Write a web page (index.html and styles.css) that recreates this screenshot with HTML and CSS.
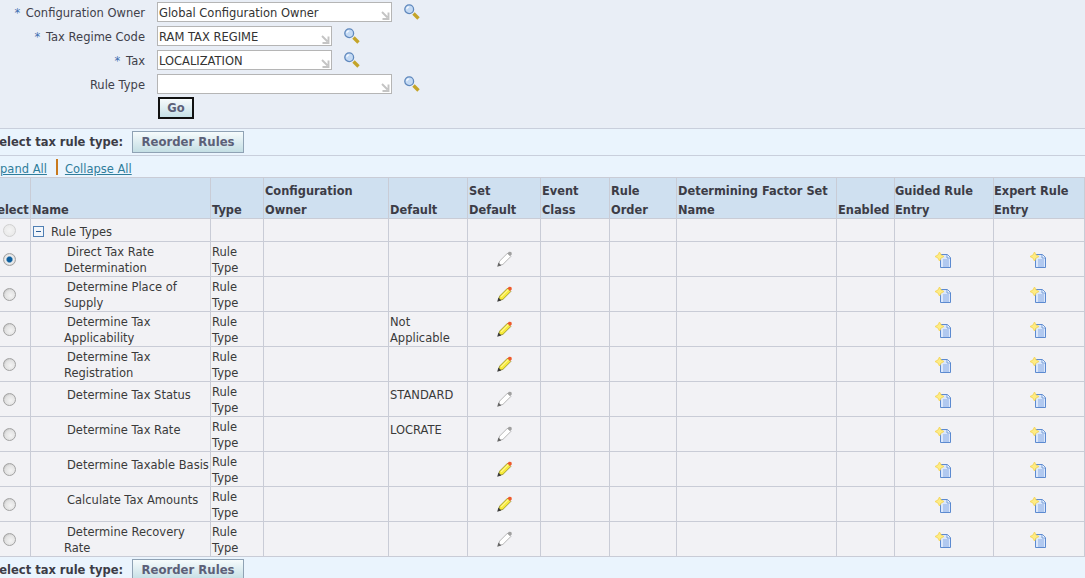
FILE: index.html
```html
<!DOCTYPE html>
<html lang="en">
<head>
<meta charset="utf-8">
<title>Tax Rules</title>
<link rel="stylesheet" href="styles.css">
</head>
<body>
<svg class="defs" width="0" height="0" aria-hidden="true">
  <symbol id="search" viewBox="0 0 16 16">
    <path d="M9.500 9.500l5 5" fill="none" stroke="#c4a429" stroke-width="3.400"/>
    <circle cx="5.200" cy="5.200" r="4.400" fill="#c4daf4" stroke="#5f88bd" stroke-width="1.300"/>
    <path d="M2.800 5.200a2.500 2.500 0 0 1 2.400-2.400" fill="none" stroke="#f4f9ff" stroke-width="1.200"/>
  </symbol>
  <symbol id="corner" viewBox="0 0 9 9">
    <path d="M1 1l5.500 5.500M7.500 1.500v6.500H1.500" fill="none" stroke="#c4c4c4" stroke-width="1.900"/>
  </symbol>
  <symbol id="pencil-on" viewBox="0 0 16 16">
    <path d="M3.600 10.100l7.900-7.900 3.300 3.300-7.900 7.900-4.300 1z" fill="#f6ea3a" stroke="#8f8a24" stroke-width=".8"/>
    <path d="M5.200 10.800l7.400-7.400" stroke="#fff59a" stroke-width="1.100"/>
    <path d="M11.300 2.400l1.700-1.700 2.300.4.600 2.100-1.700 1.800z" fill="#ee5b2c"/>
    <path d="M1.200 15.800l1.200-4.200 3 3z" fill="#3c3c3c"/>
  </symbol>
  <symbol id="pencil-off" viewBox="0 0 16 16">
    <path d="M3.600 10.100l7.900-7.900 3.300 3.300-7.900 7.900-4.300 1z" fill="#fff" stroke="#a5a5a5" stroke-width=".8"/>
    <path d="M11.300 2.400l1.700-1.700 2.300.4.600 2.100-1.700 1.800z" fill="#a0a0a0"/>
    <path d="M1.200 15.800l1.200-4.200 3 3z" fill="#666"/>
  </symbol>
  <symbol id="newdoc" viewBox="0 -1 18 17">
    <path d="M5.500 2.500h7l3 3v10h-10z" fill="#dce8fb" stroke="#5c8ad0" stroke-width="1"/>
    <path d="M12 2.500v3.500h3.500" fill="#f4f8fe" stroke="#5c8ad0" stroke-width=".8"/>
    <path d="M8 8h6M8 10h6M8 12h6M8 14h6" stroke="#86aae4" stroke-width="1"/>
    <path d="M4.500 0l1.500 3 3 1.500-3 1.500-1.500 3-1.500-3-3-1.500 3-1.500z" fill="#fdec84" stroke="#f6d657" stroke-width=".9"/>
  </symbol>
</svg>

<div class="page">
  <section class="search">
    <div class="field">
      <label class="lbl"><span class="req">*</span> Configuration Owner</label>
      <span class="input wide">Global Configuration Owner<svg class="corner"><use href="#corner"/></svg></span>
      <svg class="lens"><use href="#search"/></svg>
    </div>
    <div class="field">
      <label class="lbl"><span class="req">*</span> Tax Regime Code</label>
      <span class="input">RAM TAX REGIME<svg class="corner"><use href="#corner"/></svg></span>
      <svg class="lens"><use href="#search"/></svg>
    </div>
    <div class="field">
      <label class="lbl"><span class="req">*</span> Tax</label>
      <span class="input">LOCALIZATION<svg class="corner"><use href="#corner"/></svg></span>
      <svg class="lens"><use href="#search"/></svg>
    </div>
    <div class="field">
      <label class="lbl">Rule Type</label>
      <span class="input wide"><svg class="corner"><use href="#corner"/></svg></span>
      <svg class="lens"><use href="#search"/></svg>
    </div>
    <div class="go-row"><button class="go" type="button">Go</button></div>
  </section>

  <div class="actions">
    <strong class="prompt">Select tax rule type:</strong>
    <button class="btn" type="button">Reorder Rules</button>
  </div>

  <div class="links">
    <a href="#">Expand All</a><span class="sep"></span><a href="#">Collapse All</a>
  </div>

  <table class="grid">
    <colgroup>
      <col class="c1"><col class="c2"><col class="c3"><col class="c4"><col class="c5"><col class="c6">
      <col class="c7"><col class="c8"><col class="c9"><col class="c10"><col class="c11"><col class="c12">
    </colgroup>
    <thead>
      <tr>
        <th class="sel"><span class="hd">Select</span></th>
        <th><span class="hd">Name</span></th>
        <th><span class="hd">Type</span></th>
        <th><span class="hd">Configuration Owner</span></th>
        <th><span class="hd">Default</span></th>
        <th><span class="hd">Set Default</span></th>
        <th><span class="hd">Event Class</span></th>
        <th><span class="hd">Rule Order</span></th>
        <th><span class="hd">Determining Factor Set Name</span></th>
        <th><span class="hd">Enabled</span></th>
        <th class="tight"><span class="hd">Guided Rule Entry</span></th>
        <th class="tight"><span class="hd">Expert Rule Entry</span></th>
      </tr>
    </thead>
    <tbody>
      <tr class="root">
        <td class="mid pick"><span class="radio off"></span></td>
        <td class="tree"><span class="minus"></span>Rule Types</td>
        <td></td><td></td><td></td><td></td><td></td><td></td><td></td><td></td><td></td><td></td>
      </tr>
      <tr>
        <td class="mid pick"><span class="radio on"></span></td>
        <td class="name">Direct Tax Rate Determination</td><td>Rule Type</td><td></td><td></td>
        <td class="mid"><svg class="pen"><use href="#pencil-off"/></svg></td>
        <td></td><td></td><td></td><td></td>
        <td class="mid"><svg class="doc"><use href="#newdoc"/></svg></td><td class="mid"><svg class="doc"><use href="#newdoc"/></svg></td>
      </tr>
      <tr>
        <td class="mid pick"><span class="radio"></span></td>
        <td class="name">Determine Place of Supply</td><td>Rule Type</td><td></td><td></td>
        <td class="mid"><svg class="pen"><use href="#pencil-on"/></svg></td>
        <td></td><td></td><td></td><td></td>
        <td class="mid"><svg class="doc"><use href="#newdoc"/></svg></td><td class="mid"><svg class="doc"><use href="#newdoc"/></svg></td>
      </tr>
      <tr>
        <td class="mid pick"><span class="radio"></span></td>
        <td class="name">Determine Tax Applicability</td><td>Rule Type</td><td></td><td>Not Applicable</td>
        <td class="mid"><svg class="pen"><use href="#pencil-on"/></svg></td>
        <td></td><td></td><td></td><td></td>
        <td class="mid"><svg class="doc"><use href="#newdoc"/></svg></td><td class="mid"><svg class="doc"><use href="#newdoc"/></svg></td>
      </tr>
      <tr>
        <td class="mid pick"><span class="radio"></span></td>
        <td class="name">Determine Tax Registration</td><td>Rule Type</td><td></td><td></td>
        <td class="mid"><svg class="pen"><use href="#pencil-on"/></svg></td>
        <td></td><td></td><td></td><td></td>
        <td class="mid"><svg class="doc"><use href="#newdoc"/></svg></td><td class="mid"><svg class="doc"><use href="#newdoc"/></svg></td>
      </tr>
      <tr>
        <td class="mid pick"><span class="radio"></span></td>
        <td class="name single">Determine Tax Status</td><td>Rule Type</td><td></td><td class="single">STANDARD</td>
        <td class="mid"><svg class="pen"><use href="#pencil-off"/></svg></td>
        <td></td><td></td><td></td><td></td>
        <td class="mid"><svg class="doc"><use href="#newdoc"/></svg></td><td class="mid"><svg class="doc"><use href="#newdoc"/></svg></td>
      </tr>
      <tr>
        <td class="mid pick"><span class="radio"></span></td>
        <td class="name single">Determine Tax Rate</td><td>Rule Type</td><td></td><td class="single">LOCRATE</td>
        <td class="mid"><svg class="pen"><use href="#pencil-off"/></svg></td>
        <td></td><td></td><td></td><td></td>
        <td class="mid"><svg class="doc"><use href="#newdoc"/></svg></td><td class="mid"><svg class="doc"><use href="#newdoc"/></svg></td>
      </tr>
      <tr>
        <td class="mid pick"><span class="radio"></span></td>
        <td class="name single">Determine Taxable Basis</td><td>Rule Type</td><td></td><td></td>
        <td class="mid"><svg class="pen"><use href="#pencil-on"/></svg></td>
        <td></td><td></td><td></td><td></td>
        <td class="mid"><svg class="doc"><use href="#newdoc"/></svg></td><td class="mid"><svg class="doc"><use href="#newdoc"/></svg></td>
      </tr>
      <tr>
        <td class="mid pick"><span class="radio"></span></td>
        <td class="name single">Calculate Tax Amounts</td><td>Rule Type</td><td></td><td></td>
        <td class="mid"><svg class="pen"><use href="#pencil-on"/></svg></td>
        <td></td><td></td><td></td><td></td>
        <td class="mid"><svg class="doc"><use href="#newdoc"/></svg></td><td class="mid"><svg class="doc"><use href="#newdoc"/></svg></td>
      </tr>
      <tr>
        <td class="mid pick"><span class="radio"></span></td>
        <td class="name">Determine Recovery Rate</td><td>Rule Type</td><td></td><td></td>
        <td class="mid"><svg class="pen"><use href="#pencil-off"/></svg></td>
        <td></td><td></td><td></td><td></td>
        <td class="mid"><svg class="doc"><use href="#newdoc"/></svg></td><td class="mid"><svg class="doc"><use href="#newdoc"/></svg></td>
      </tr>
    </tbody>
  </table>

  <div class="actions bottom">
    <strong class="prompt">Select tax rule type:</strong>
    <button class="btn" type="button">Reorder Rules</button>
  </div>
</div>
</body>
</html>
```

FILE: styles.css
```css
html, body {
  margin: 0;
  padding: 0;
  height: 100%;
  overflow: hidden;
  background: #f2f2f5;
}
body {
  font-family: "DejaVu Sans", Verdana, sans-serif;
  font-size: 11.5px;
  line-height: 16px;
  color: #3a3a3a;
}
.defs { position: absolute; }
.page { width: 1085px; height: 578px; overflow: hidden; }

/* search panel */
.search {
  box-sizing: border-box;
  height: 129px;
  padding-top: 2px;
  background: #e9eef6;
  border-bottom: 1px solid #c9cfdc;
}
.field {
  display: flex;
  align-items: center;
  height: 20px;
  margin-bottom: 4px;
}
.lbl {
  box-sizing: border-box;
  width: 145px;
  padding-top: 2px;
  text-align: right;
  margin-right: 12px;
  color: #40404a;
}
.req { color: #3f6fb0; margin-right: 2px; }
.input {
  box-sizing: border-box;
  position: relative;
  width: 175px;
  height: 20px;
  padding: 2px 0 0 1px;
  background: #fff;
  border: 1px solid #b5b5b5;
  color: #333;
  line-height: 16px;
}
.input.wide { width: 235px; }
.corner {
  position: absolute;
  right: 1px;
  bottom: 1px;
  width: 9px;
  height: 9px;
}
.lens { width: 16px; height: 16px; margin: 0 0 0 12px; }
.go-row { padding: 0 0 0 158px; margin-top: -1px; }
.go {
  box-sizing: border-box;
  display: block;
  width: 36px;
  height: 22px;
  padding: 0;
  border: 2px solid #111;
  background: linear-gradient(#f7fbfc, #c6e0e6);
  color: #5c6078;
  font: bold 11.5px "DejaVu Sans", Verdana, sans-serif;
}

/* action bars */
.actions {
  box-sizing: border-box;
  display: flex;
  align-items: center;
  height: 27px;
  margin-left: -14px;
  width: 1099px;
  background: #eaf4fd;
  border-bottom: 1px solid #c9cfdc;
}
.prompt {
  box-sizing: border-box;
  width: 146px;
  padding-left: 5px;
  color: #3c3c46;
  white-space: nowrap;
}
.btn {
  box-sizing: border-box;
  width: 112px;
  height: 22px;
  padding: 0;
  border: 1px solid #8fa2b4;
  background: linear-gradient(#f6fbfc, #c4dee4);
  color: #5c6078;
  font: bold 11.700px "DejaVu Sans", Verdana, sans-serif;
}
.bottom { align-items: flex-start; padding-top: 2px; border-bottom: 0; height: 30px; }
.bottom .prompt { padding-top: 3px; }

/* links */
.links {
  box-sizing: border-box;
  display: flex;
  align-items: center;
  height: 21px;
  margin-left: -14px;
  background: #eaf4fd;
  width: 1099px;
  padding-top: 5px;
}
.links a { color: #2f7d9b; }
.sep {
  width: 2px;
  height: 16px;
  margin: -4px 7px 0 9px;
  background: #c87a1e;
}

/* table */
.grid {
  table-layout: fixed;
  width: 1099px;
  margin-left: -14px;
  border-spacing: 0;
  border-collapse: separate;
  border-top: 1px solid #c9ccd6;
  background: #f2f2f5;
}
.c1 { width: 45px; }
.c2 { width: 180px; }
.c3 { width: 53px; }
.c4 { width: 125px; }
.c5 { width: 79px; }
.c6 { width: 73px; }
.c7 { width: 69px; }
.c8 { width: 67px; }
.c9 { width: 160px; }
.c10 { width: 58px; }
.c11 { width: 99px; }
.c12 { width: 91px; }
th, td {
  box-sizing: border-box;
  padding: 2px 1px 0 1px;
  border-right: 1px solid #c9ccd6;
  border-bottom: 1px solid #c9ccd6;
  vertical-align: top;
  text-align: left;
  font-weight: normal;
  overflow: hidden;
}
th {
  height: 41px;
  padding: 2px 1px 0 1px;
  vertical-align: bottom;
  background: #cfe0f0;
  color: #3c3c46;
  font-size: 11.400px;
  font-weight: bold;
  line-height: 19px;
}
.hd { display: block; margin: 2px 0 -2px; }
th.sel { padding-left: 3px; }
th.tight { padding-left: 0; }
td { height: 35px; }
.root td { height: 23px; }
td.mid { text-align: center; vertical-align: middle; padding: 0; }
td.pick { padding-left: 2px; }
td.name { padding-left: 33px; text-indent: 3px; }
td.single { padding-top: 5px; }
.root td.tree { padding: 5px 0 0 2px; }

/* glyphs */
.radio {
  display: inline-block;
  box-sizing: border-box;
  width: 13px;
  height: 13px;
  vertical-align: middle;
  border: 1px solid #a2a2a2;
  border-radius: 50%;
  background: radial-gradient(circle at 60% 60%, #f4f4f4 0, #e2e2e2 55%, #adadad 100%);
}
.radio.off { border-color: #d0d0d0; background: radial-gradient(circle, #f4f4f4 0, #e6e6e6 100%); }
.radio.on { background: radial-gradient(circle, #0d5f9e 0, #0d5f9e 30%, #f2f2f2 48%, #b8b8b8 100%); }
.minus {
  display: inline-block;
  box-sizing: border-box;
  width: 11px;
  height: 11px;
  margin-right: 7px;
  vertical-align: -1px;
  border: 1px solid #4f7fb3;
  background: linear-gradient(90deg, transparent 2px, #2f5f96 2px, #2f5f96 7px, transparent 7px) center / 100% 1px no-repeat #f2f6fb;
}
.pen { width: 16px; height: 16px; display: inline-block; vertical-align: middle; }
.doc { width: 18px; height: 17px; display: inline-block; vertical-align: middle; }
```
